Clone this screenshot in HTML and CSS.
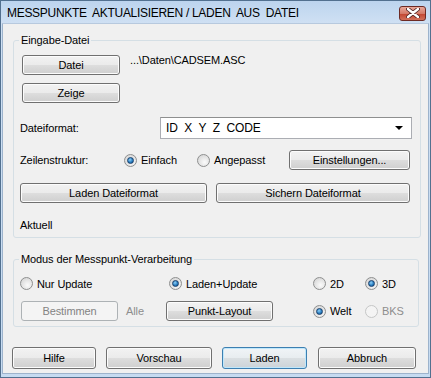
FILE: index.html
```html
<!DOCTYPE html>
<html>
<head>
    <title>Messpunkte aktualisieren</title>
    <link rel="stylesheet" href="styles.css">
</head>
<body>
    <div class="window">
        <div class="titlebar">
            <span class="title">MESSPUNKTE&nbsp; AKTUALISIEREN / LADEN&nbsp; AUS&nbsp; DATEI</span>
            <div class="close-btn">
                <svg width="14" height="10" viewBox="0 0 14 10">
                    <path d="M2 1 L12 9 M12 1 L2 9" stroke="#4a2020" stroke-width="4" stroke-linecap="round"/>
                    <path d="M2 1 L12 9 M12 1 L2 9" stroke="#ffffff" stroke-width="2.4" stroke-linecap="round"/>
                </svg>
            </div>
        </div>

        <div class="client">
            <fieldset class="group group-input">
                <legend>Eingabe-Datei</legend>

                <div class="row row-file">
                    <button class="btn btn-file">Datei</button>
                    <span class="path">...\Daten\CADSEM.ASC</span>
                </div>
                <div class="row row-show">
                    <button class="btn btn-file">Zeige</button>
                </div>

                <div class="row row-format">
                    <span class="label label-format">Dateiformat:</span>
                    <div class="combo">
                        <span class="combo-text">ID&nbsp; X&nbsp; Y&nbsp; Z&nbsp; CODE</span>
                        <span class="combo-arrow"></span>
                    </div>
                </div>

                <div class="row row-struct">
                    <span class="label label-struct">Zeilenstruktur:</span>
                    <label class="radio radio-einfach"><span class="dot checked"></span>Einfach</label>
                    <label class="radio radio-angepasst"><span class="dot"></span>Angepasst</label>
                    <button class="btn btn-settings">Einstellungen...</button>
                </div>

                <div class="row row-load">
                    <button class="btn btn-load-format">Laden Dateiformat</button>
                    <button class="btn btn-save-format">Sichern Dateiformat</button>
                </div>

                <div class="row row-current">
                    <span class="label">Aktuell</span>
                </div>
            </fieldset>

            <fieldset class="group group-mode">
                <legend>Modus der Messpunkt-Verarbeitung</legend>

                <div class="row row-mode">
                    <label class="radio col-a"><span class="dot"></span>Nur Update</label>
                    <label class="radio col-b"><span class="dot checked"></span>Laden+Update</label>
                    <label class="radio col-c"><span class="dot"></span>2D</label>
                    <label class="radio"><span class="dot checked"></span>3D</label>
                </div>

                <div class="row row-layout">
                    <button class="btn btn-disabled btn-determine">Bestimmen</button>
                    <span class="label disabled label-all">Alle</span>
                    <button class="btn btn-layout">Punkt-Layout</button>
                    <label class="radio col-c"><span class="dot checked"></span>Welt</label>
                    <label class="radio disabled"><span class="dot"></span>BKS</label>
                </div>
            </fieldset>

            <div class="footer">
                <button class="btn btn-help">Hilfe</button>
                <button class="btn btn-preview">Vorschau</button>
                <button class="btn btn-default btn-ok">Laden</button>
                <button class="btn btn-cancel">Abbruch</button>
            </div>
        </div>
    </div>
</body>
</html>
```

FILE: styles.css
```css
body {
    margin: 0;
    padding: 0;
    font-family: "Liberation Sans", Arial, sans-serif;
    font-size: 11px;
    letter-spacing: -0.1px;
    color: #000;
    background-color: #c9dcf0;
}
.window {
    width: 431px;
    height: 378px;
    box-sizing: border-box;
    border: 1px solid #52708f;
    background: linear-gradient(to bottom, #bcd4ee, #cfe0f3 22px, #c6dbf1);
    display: flex;
    flex-direction: column;
}
.titlebar {
    height: 22px;
    display: flex;
    align-items: center;
    padding-left: 6px;
    padding-right: 4px;
}
.title {
    font-size: 12px;
    letter-spacing: -0.3px;
    color: #000;
    flex: 1;
    margin-top: 2px;
}
.close-btn {
    width: 27px;
    height: 15px;
    margin-top: 2px;
    box-sizing: border-box;
    border: 1px solid #6d2a24;
    border-radius: 3px;
    background: linear-gradient(to bottom, #e9a99b, #d47a68 50%, #c2442f 51%, #d1705a);
    display: flex;
    align-items: center;
    justify-content: center;
}
.client {
    flex: 1;
    margin: 0 1px 3px 1px;
    background-color: #f0f0f0;
    border: 1px solid #9db3cc;
    border-top-color: #b7c9de;
    padding: 10px 9px 0 10px;
}
.group {
    margin: 0;
    border: 1px solid #d5dfe5;
    border-radius: 3px;
    padding: 0 8px 0 6px;
}
.group legend {
    padding: 0 2px;
    margin-left: -1px;
    line-height: 13px;
}
.group-input {
    padding-top: 8px;
    padding-bottom: 6px;
}
.group-mode {
    margin-top: 15px;
    padding-top: 11px;
    padding-bottom: 5px;
}
.row {
    display: flex;
    align-items: center;
}
.btn {
    font-family: "Liberation Sans", Arial, sans-serif;
    font-size: 11px;
    letter-spacing: -0.1px;
    color: #000;
    height: 20px;
    padding: 0;
    box-sizing: border-box;
    border: 1px solid #707070;
    border-radius: 3px;
    background: linear-gradient(to bottom, #f2f2f2, #ebebeb 48%, #dddddd 52%, #cfcfcf);
    box-shadow: inset 0 0 0 1px #fcfcfc;
}
.btn-file {
    width: 98px;
    margin-left: 2px;
}
.path {
    margin-left: 10px;
    margin-top: -10px;
}
.row-show {
    margin-top: 8px;
}
.row-format {
    margin-top: 14px;
}
.label-format {
    width: 140px;
}
.combo {
    width: 252px;
    height: 22px;
    box-sizing: border-box;
    border: 1px solid #abadb3;
    border-top-color: #8e8f8f;
    background-color: #fff;
    display: flex;
    align-items: center;
    padding-left: 5px;
    padding-right: 8px;
}
.combo-text {
    flex: 1;
    font-size: 12px;
}
.combo-arrow {
    width: 0;
    height: 0;
    border-left: 4px solid transparent;
    border-right: 4px solid transparent;
    border-top: 4px solid #000;
}
.row-struct {
    margin-top: 11px;
}
.label-struct {
    width: 104px;
}
.radio {
    display: flex;
    align-items: center;
    height: 13px;
}
.dot {
    width: 13px;
    height: 13px;
    box-sizing: border-box;
    border-radius: 50%;
    border: 1px solid #8e8f8f;
    background: radial-gradient(circle at 60% 65%, #fbfbfb, #dcdcdc 70%, #cfcfcf);
    margin-right: 4px;
    position: relative;
}
.dot.checked::after {
    content: "";
    position: absolute;
    left: 2px;
    top: 2px;
    width: 7px;
    height: 7px;
    box-sizing: border-box;
    border-radius: 50%;
    border: 1px solid #1a3f6a;
    background: radial-gradient(circle at 40% 35%, #8fd0f7, #2a7fc2 55%, #0c4a88);
}
.radio-einfach {
    width: 73px;
}
.radio-angepasst {
    width: 92px;
}
.btn-settings {
    width: 121px;
}
.row-load {
    margin-top: 13px;
}
.btn-load-format {
    width: 187px;
}
.btn-save-format {
    width: 194px;
    margin-left: 9px;
}
.row-current {
    margin-top: 15px;
    height: 13px;
}
.col-a {
    width: 149px;
}
.col-b {
    width: 144px;
}
.col-c {
    width: 52px;
}
.row-layout {
    margin-top: 11px;
}
.btn-disabled {
    color: #838383;
    border-color: #adb2b5;
    background: #f4f4f4;
    box-shadow: none;
}
.btn-determine {
    width: 97px;
    margin-left: 1px;
}
.label-all {
    width: 40px;
    margin-left: 8px;
}
.disabled {
    color: #8d8d8d;
}
.radio.disabled .dot {
    border-color: #c5c6c6;
    background: #f4f4f4;
}
.btn-layout {
    width: 107px;
    margin-right: 40px;
}
.footer {
    display: flex;
    margin-top: 20px;
}
.footer .btn {
    height: 22px;
}
.btn-help {
    width: 84px;
    margin-left: -1px;
}
.btn-preview {
    width: 106px;
    margin-left: 10px;
}
.btn-ok {
    width: 85px;
    margin-left: 10px;
}
.btn-cancel {
    width: 98px;
    margin-left: 11px;
}
.btn-default {
    border-color: #3c7fb1;
    box-shadow: inset 0 0 0 1px #bfe7fb;
    background: linear-gradient(to bottom, #f0f4f7, #e8edf0 48%, #dadfe2 52%, #ccd3d8);
}
```
